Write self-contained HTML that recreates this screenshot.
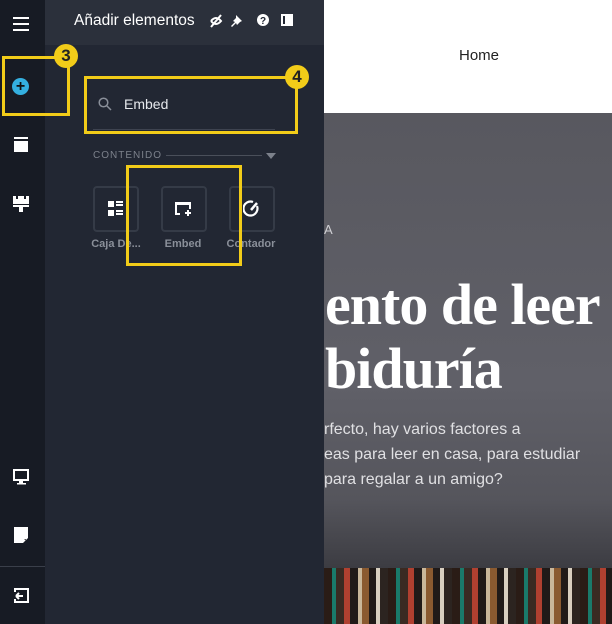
<!DOCTYPE html>
<html><head><meta charset="utf-8"><style>
*{margin:0;padding:0;box-sizing:border-box}
body{width:612px;height:624px;overflow:hidden;position:relative;font-family:"Liberation Sans",sans-serif;background:#fff}
.abs{position:absolute}
.side{left:0;top:0;width:45px;height:624px;background:#171b24}
.panel{left:45px;top:0;width:279px;height:624px;background:#222733}
.head{left:45px;top:0;width:279px;height:45px;background:#2b303b}
.y{border:3px solid #f2cc19}
.badge{width:24px;height:24px;border-radius:50%;background:#f2cc19;color:#222;font-weight:bold;font-size:17px;text-align:center;line-height:24px}
.tile{width:46px;height:46px;border:2px solid #353b47;border-radius:4px}
.lbl{font-size:11px;color:#8a8f99;font-weight:bold;text-align:center;width:70px}
.hero{left:324px;top:113px;width:288px;height:455px;background:linear-gradient(#58585f 0%,#606068 60%,#55555c 85%,#3c3c42 100%)}
</style></head><body>
<div class="abs side"></div>
<div class="abs panel"></div>
<div class="abs head"></div>
<div class="abs" style="left:13px;top:17px;width:16px;height:2px;background:#fff;box-shadow:0 6px 0 #fff,0 12px 0 #fff"></div>
<div class="abs" style="left:74px;top:12px;color:#fff;font-size:15.5px;">Añadir elementos</div>
<svg class="abs" style="left:208px;top:13px" width="110" height="16">
<g fill="none" stroke="#fff" stroke-width="2"><path d="M3 8q5-6 10 0q-5 6-10 0M3 14L13 2"/></g>
<path d="M28 2l6 6-2 1-3 3-1-2-4 4-1-1 4-4-2-1 3-3z" fill="#fff"/>
<circle cx="55" cy="7" r="6" fill="#fff"/><text x="52" y="11" font-size="10" font-weight="bold" fill="#222733" font-family="Liberation Sans">?</text>
<rect x="73" y="1" width="12" height="12" fill="#fff"/><rect x="75" y="3" width="2" height="8" fill="#222733"/>
</svg>
<div class="abs" style="left:12px;top:78px;width:17px;height:17px;border-radius:50%;background:#34b0e0;color:#111;font-weight:bold;font-size:16px;text-align:center;line-height:17px">+</div>
<div class="abs y" style="left:2px;top:56px;width:68px;height:60px"></div>
<div class="abs badge" style="left:54px;top:44px">3</div>
<div class="abs" style="left:14px;top:137px;width:14px;height:2px;background:#fff"></div>
<div class="abs" style="left:14px;top:141px;width:14px;height:11px;background:#fff"></div>
<svg class="abs" style="left:12px;top:195px" width="18" height="18"><path d="M1 1h3v3h2V1h6v3h2V1h3v8H1zM1 10h16v2h-6v5h-4v-5H1z" fill="#fff"/></svg>
<div class="abs" style="left:0;top:566px;width:45px;height:1px;background:#3a3f4a"></div>
<svg class="abs" style="left:13px;top:469px" width="17" height="17"><rect x="1" y="1" width="14" height="10" fill="none" stroke="#fff" stroke-width="2"/><rect x="6" y="12" width="4" height="2" fill="#fff"/><rect x="4" y="14" width="9" height="1.5" fill="#fff"/></svg>
<svg class="abs" style="left:14px;top:527px" width="15" height="17"><path d="M0 0h14v11l-5 5H0z" fill="#fff"/><path d="M10 12h2v2" fill="#555"/></svg>
<svg class="abs" style="left:13px;top:587px" width="17" height="18"><path d="M1 1h15v15H1v-4h2v2h11V3H3v2H1z" fill="#fff"/><path d="M3 9h7M3 9l3-3M3 9l3 3" stroke="#fff" stroke-width="2" fill="none"/></svg>
<svg class="abs" style="left:98px;top:97px" width="14" height="14"><circle cx="5.5" cy="5.5" r="4.3" stroke="#8a8f99" stroke-width="1.5" fill="none"/><path d="M9 9l4 4" stroke="#8a8f99" stroke-width="1.5"/></svg>
<div class="abs" style="left:124px;top:96px;color:#e6e8ec;font-size:14px">Embed</div>
<div class="abs" style="left:93px;top:129px;width:182px;height:1px;background:#3e4350"></div>
<div class="abs y" style="left:84px;top:76px;width:214px;height:58px"></div>
<div class="abs badge" style="left:285px;top:65px">4</div>
<div class="abs" style="left:93px;top:150px;font-size:10px;color:#7c818b;letter-spacing:1px">CONTENIDO</div>
<div class="abs" style="left:166px;top:155px;width:96px;height:1px;background:#4a4f5a"></div>
<div class="abs" style="left:266px;top:153px;border-left:5px solid transparent;border-right:5px solid transparent;border-top:6px solid #7c818b"></div>
<div class="abs tile" style="left:93px;top:186px"></div>
<div class="abs tile" style="left:161px;top:186px"></div>
<div class="abs tile" style="left:229px;top:186px"></div>
<svg class="abs" style="left:107px;top:200px" width="18" height="18"><rect x="1" y="1" width="6" height="6" fill="#fff"/><rect x="1" y="10" width="6" height="6" fill="#fff"/><path d="M9 2h7M9 5h7M9 11h7M9 14h7" stroke="#fff" stroke-width="2"/></svg>
<svg class="abs" style="left:175px;top:201px" width="18" height="16"><path d="M5 13H1V2h14v6" stroke="#fff" stroke-width="2" fill="none"/><rect x="1" y="1" width="15" height="3" fill="#fff"/><path d="M10 12h6M13 9v6" stroke="#fff" stroke-width="2"/></svg>
<svg class="abs" style="left:243px;top:200px" width="18" height="18"><path d="M14 6A7 7 0 1 1 10 2" stroke="#fff" stroke-width="2.2" fill="none"/><path d="M8 10l6-7" stroke="#fff" stroke-width="2.5"/></svg>
<div class="abs lbl" style="left:81px;top:238px">Caja De...</div>
<div class="abs lbl" style="left:148px;top:238px">Embed</div>
<div class="abs lbl" style="left:216px;top:238px">Contador</div>
<div class="abs y" style="left:126px;top:165px;width:116px;height:101px"></div>
<div class="abs" style="left:459px;top:47px;font-size:15px;color:#222">Home</div>
<div class="abs hero"></div>
<div class="abs" style="left:324px;top:222px;color:#cfcfd3;font-size:13px">A</div>
<div class="abs" style="left:325px;top:273px;color:#fff;font-family:'Liberation Serif',serif;font-weight:bold;font-size:58px;letter-spacing:-1px;white-space:nowrap;line-height:64px">ento de leer<br>bidur&iacute;a</div>
<div class="abs" style="left:324px;top:417px;color:#e0e0e3;font-size:16px;line-height:25px;white-space:nowrap">rfecto, hay varios factores a<br>eas para leer en casa, para estudiar<br>para regalar a un amigo?</div>
<div class="abs" style="left:324px;top:568px;width:288px;height:56px;background:repeating-linear-gradient(90deg,#2a1c16 0 8px,#1a7a6a 8px 12px,#3a2a22 12px 20px,#b04030 20px 26px,#201a18 26px 34px,#c9b79a 34px 38px,#8a5a30 38px 45px,#201a18 45px 52px,#d8cfc0 52px 56px,#2c2420 56px 64px)"></div>
</body></html>
